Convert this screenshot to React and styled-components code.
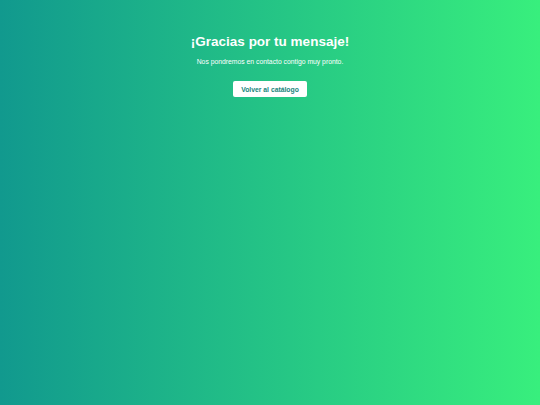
import React from "react";
import styled, { createGlobalStyle } from "styled-components";

const Global = createGlobalStyle`
  html, body { margin: 0; padding: 0; height: 100%; }
  body { font-family: "Liberation Sans", Arial, sans-serif; }
  #root { height: 100%; }
`;

const Page = styled.div`
  min-height: 100vh;
  background: linear-gradient(to right, #11998e, #38ef7d);
  display: flex;
  flex-direction: column;
  align-items: center;
  padding-top: 34px;
  box-sizing: border-box;
  color: #fff;
  text-align: center;
`;

const Title = styled.h1`
  margin: 0;
  font-size: 13.5px;
  font-weight: 700;
  line-height: 16px;
`;

const Subtitle = styled.p`
  margin: 8px 0 0;
  font-size: 6.8px;
  line-height: 8px;
`;

const Button = styled.button`
  margin-top: 15px;
  background: #fff;
  color: #16867d;
  border: none;
  border-radius: 2px;
  font-family: "Liberation Sans", Arial, sans-serif;
  font-size: 6.8px;
  font-weight: 700;
  padding: 0 8.5px;
  height: 16px;
  cursor: pointer;
`;

export default function App() {
  return (
    <>
      <Global />
      <Page>
        <Title>¡Gracias por tu mensaje!</Title>
        <Subtitle>Nos pondremos en contacto contigo muy pronto.</Subtitle>
        <Button>Volver al catálogo</Button>
      </Page>
    </>
  );
}
